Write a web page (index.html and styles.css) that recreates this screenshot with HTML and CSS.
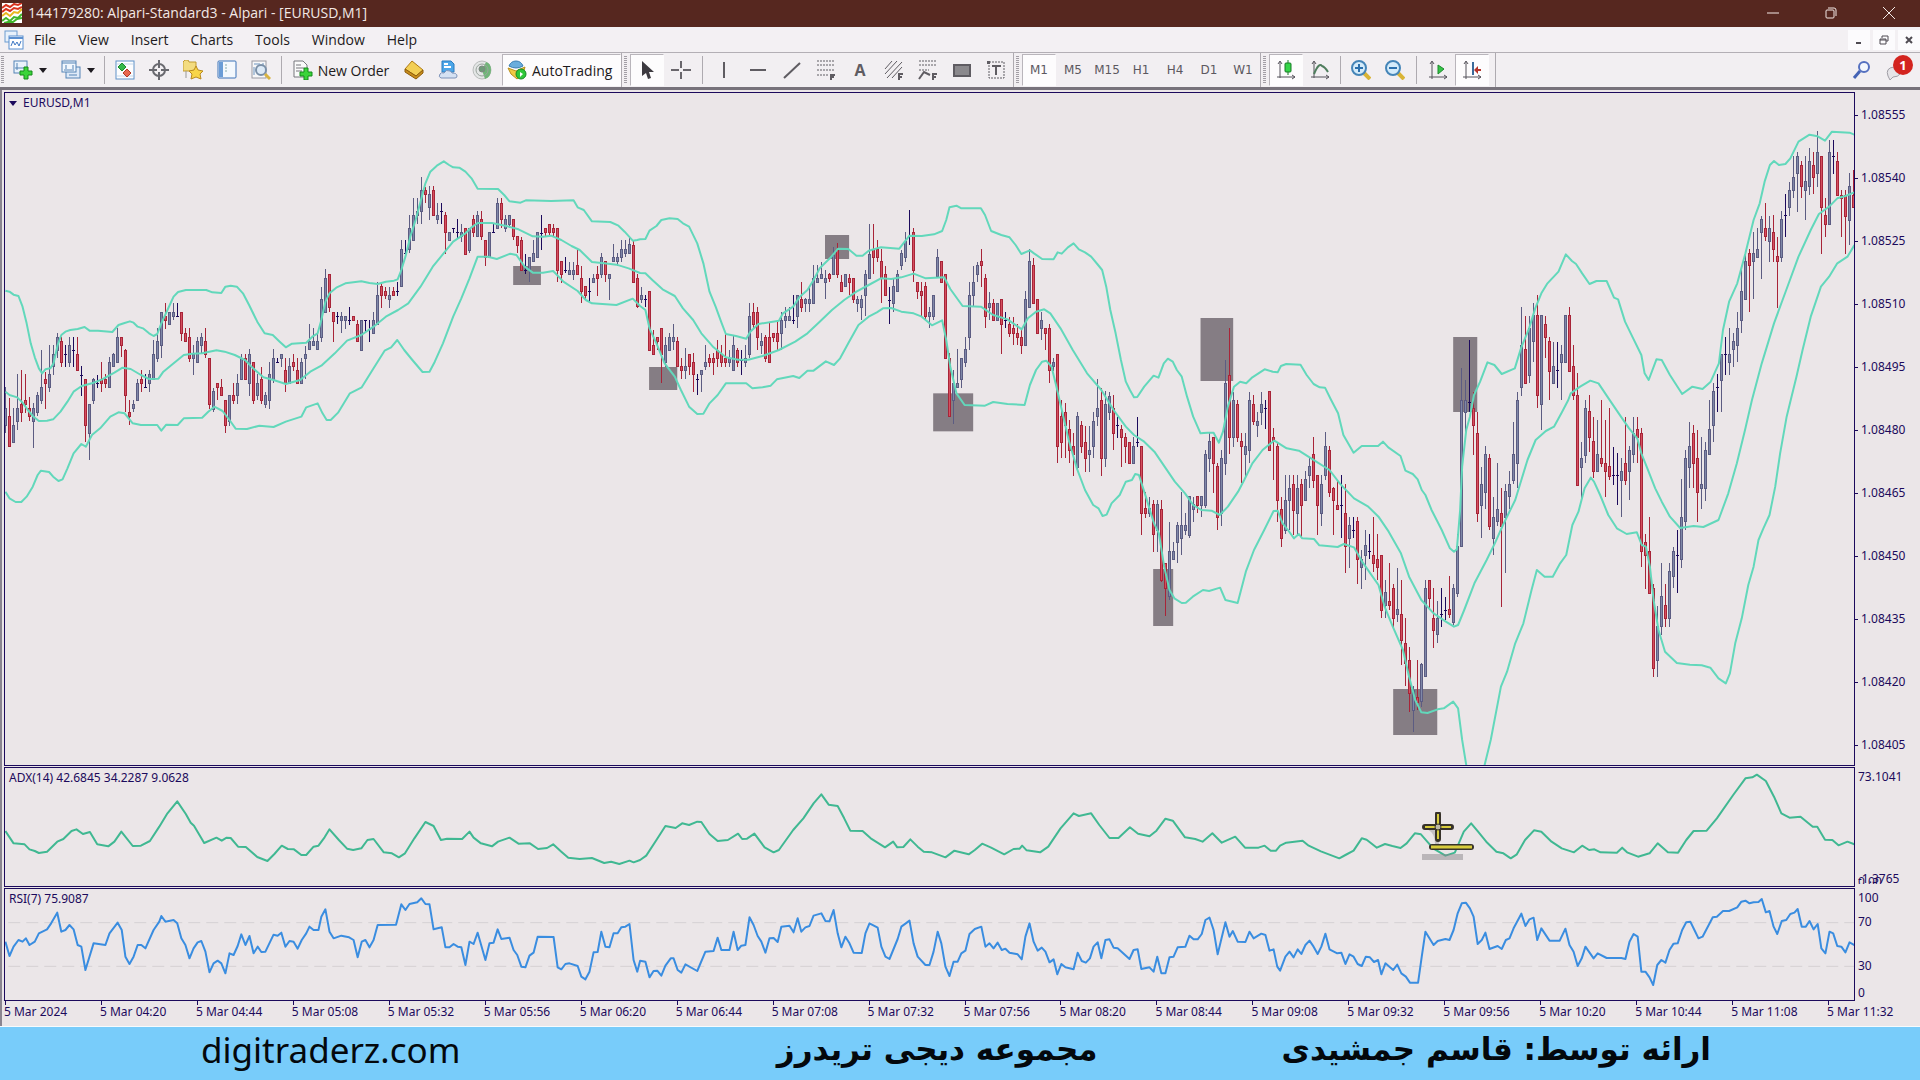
FILE: index.html
```
<!DOCTYPE html>
<html lang="en">
<head>
    <meta charset="UTF-8">
    <meta name="viewport" content="width=device-width, initial-scale=1.0">
    <title>144179280: Alpari-Standard3 - Alpari - [EURUSD,M1]</title>
    <link rel="stylesheet" href="styles.css">
</head>
<body>
    <header class="titlebar">
        <svg class="app-icon" viewBox="0 0 20 20"><rect width="20" height="20" fill="#fff"/><path d="M0 5l4-3 4 2 4-3 4 1 4-2M0 9l4-3 4 2 4-3 4 1 4-2" fill="none" stroke="#d8321e" stroke-width="2"/><path d="M0 13l4-3 4 3 4-4 4 1 4-4" fill="none" stroke="#e8b820" stroke-width="2"/><path d="M0 18l4-3 4 3 4-4 4 1 4-4M2 20l4-1 5 0 4-3 5-1" fill="none" stroke="#3fb52a" stroke-width="2"/></svg>
        <h1>144179280: Alpari-Standard3 - Alpari - [EURUSD,M1]</h1>
        <div class="win-buttons">
            <button aria-label="Minimize"><svg viewBox="0 0 14 14"><path d="M1 7h12"/></svg></button>
            <button aria-label="Restore"><svg viewBox="0 0 14 14"><rect x="2" y="4" width="8" height="8" rx="1"/><path d="M4 2h6q2 0 2 2v6"/></svg></button>
            <button aria-label="Close"><svg viewBox="0 0 14 14"><path d="M1 1l12 12M13 1L1 13"/></svg></button>
        </div>
    </header>

    <nav class="menubar">
        <svg class="doc-icon" viewBox="0 0 20 20"><rect x="1" y="1" width="12" height="11" fill="#e8f1fb" stroke="#6d9bd0"/><rect x="5" y="6" width="14" height="13" fill="#fff" stroke="#5b8fd0"/><path d="M5 8h14" stroke="#5b8fd0" stroke-width="2"/><path d="M7 16l2-5 2 4 2-3 2 4 2-5" fill="none" stroke="#3f78c4"/></svg>
        <button>File</button>
        <button>View</button>
        <button>Insert</button>
        <button>Charts</button>
        <button>Tools</button>
        <button>Window</button>
        <button>Help</button>
        <div class="mdi-buttons">
            <button aria-label="Minimize chart"><svg viewBox="0 0 10 10"><path d="M2 8h5" stroke-width="2"/></svg></button>
            <button aria-label="Restore chart"><svg viewBox="0 0 10 10"><path d="M3 3V1h6v5H7M1 4h6v5H1zM1 5h6"/></svg></button>
            <button aria-label="Close chart"><svg viewBox="0 0 10 10"><path d="M2 2l6 6M8 2L2 8" stroke-width="2"/></svg></button>
        </div>
    </nav>

    <div class="toolbar">
        <span class="grip"></span>
        <button class="split" aria-label="New chart"><svg viewBox="0 0 20 20"><rect x="1" y="1" width="13" height="12" fill="#eaf2fb" stroke="#5583b5"/><path d="M4 3v7M2 8h10" stroke="#5583b5"/><path d="M11 7h4v4h4v4h-4v4h-4v-4H7v-4h4z" fill="#3bd43a" stroke="#158a1b"/></svg><i class="arrow"></i></button>
        <button class="split" aria-label="Profiles"><svg viewBox="0 0 20 20"><rect x="5" y="7" width="14" height="11" fill="#dfeaf8" stroke="#5583b5"/><rect x="1" y="1" width="14" height="11" fill="#f2f7fd" stroke="#5583b5"/><path d="M1 3h14M3 10h10M8 15h8M5 5v4M12 5v4" stroke="#5583b5"/></svg><i class="arrow"></i></button>
        <span class="sep"></span>
        <button class="tool" aria-label="Market Watch"><svg viewBox="0 0 20 20"><rect x="1" y="1" width="18" height="18" fill="#fdfdfe" stroke="#5f92c8"/><path d="M2 4h16M2 16h16" stroke="#c5d8ec"/><path d="M7 3l4 4-4 4-4-4z" fill="#35b84a" stroke="#1d8a2c"/><path d="M12 9l4 4-4 4-4-4z" fill="#e8694f" stroke="#b33a26"/></svg></button>
        <button class="tool" aria-label="Data Window"><svg viewBox="0 0 20 20"><circle cx="10" cy="10" r="6" fill="none" stroke="#69696f" stroke-width="2"/><path d="M10 0v8M10 12v8M0 10h8M12 10h8" stroke="#69696f" stroke-width="2"/></svg></button>
        <button class="tool" aria-label="Navigator"><svg viewBox="0 0 20 20"><path d="M0 2l2-2h3l1 2h7v9H0z" fill="#f3dc80" stroke="#c09a30"/><path d="M3 11v7" stroke="#999"/><path d="M13 6l2 4 5 1-3 3 1 5-5-2-5 2 1-5-3-3 5-1z" fill="#f8d548" stroke="#b98a20"/></svg></button>
        <button class="tool" aria-label="Terminal"><svg viewBox="0 0 20 20"><rect x="1" y="1" width="18" height="17" rx="1" fill="#f4f8fd" stroke="#3c73b8"/><path d="M2 2h4v15H2z" fill="#6b9cd6"/><path d="M8 5h2M8 8h2M8 11h2" stroke="#8aa"/></svg></button>
        <button class="tool" aria-label="Strategy Tester"><svg viewBox="0 0 20 20"><rect x="1" y="1" width="14" height="17" fill="#f7f7f9" stroke="#9a9aa2"/><path d="M3 4h6M3 7v8M12 3v4" stroke="#6d94bf"/><circle cx="10" cy="10" r="5" fill="#d6e6f6" fill-opacity=".8" stroke="#7b90a8" stroke-width="2"/><path d="M14 14l5 5" stroke="#d8b341" stroke-width="3"/></svg></button>
        <span class="sep"></span>
        <button class="labelled order"><svg viewBox="0 0 20 20"><path d="M1 1h9l4 4v12H1z" fill="#fafafa" stroke="#77777d"/><path d="M3 5h5M3 8h8M3 11h6" stroke="#77777d"/><path d="M11 8h4v4h4v4h-4v4h-4v-4H7v-4h4z" fill="#3bd43a" stroke="#158a1b"/></svg>New Order</button>
        <button class="tool" aria-label="MetaEditor"><svg viewBox="0 0 20 20"><path d="M8 1l11 9-7 6L1 9z" fill="#f3cf55" stroke="#b07a14"/><path d="M1 9l11 7 7-6v3l-7 6L1 12z" fill="#c98d1c" stroke="#8d5c0c"/></svg></button>
        <button class="tool" aria-label="Cloud"><svg viewBox="0 0 20 20"><path d="M4 1h9l3 3v8H4z" fill="#4da6e8" stroke="#2a7cc0"/><path d="M6 4h4M6 7h7" stroke="#fff" stroke-width="2"/><path d="M3 18q-3-1-1-4 1-2 4-1 2-4 6-2 2 1 2 2 5 0 5 3 0 2-2 2z" fill="#d5e1f3" stroke="#7d92b8"/></svg></button>
        <button class="tool" aria-label="Signals"><svg viewBox="0 0 20 20"><circle cx="10" cy="10" r="9" fill="#e4e6e6" stroke="#b9bcbb"/><path d="M10 10l3 9q6-2 6-9t-5-8z" fill="#70b578"/><circle cx="10" cy="10" r="6" fill="none" stroke="#9aa39d"/><circle cx="10" cy="9" r="3" fill="#6f9a79" stroke="#7d8880"/></svg></button>
        <button class="labelled auto pressed"><svg viewBox="0 0 20 20"><path d="M2 6q2-5 7-5t7 5q-7 4-14 0z" fill="#6aaddc" stroke="#3a7fb3"/><path d="M1 8l8 3 9-4-2 7-6 5-6-5z" fill="#f0c945" stroke="#b88f1e"/><circle cx="14" cy="14" r="5" fill="#2fc83a" stroke="#168a22"/><path d="M13 12v5l3-3z" fill="#fff"/></svg>AutoTrading</button>
        <span class="edge"></span>

        <button class="tool pressed" aria-label="Cursor"><svg viewBox="0 0 20 20"><path d="M5 1v15l4-3 2 6 3-1-2-6h5z" fill="#3d3a40"/></svg></button>
        <button class="tool" aria-label="Crosshair"><svg viewBox="0 0 20 20"><path d="M10 1v7M10 12v7M0 10h8M12 10h8" stroke="#69666c" stroke-width="2"/></svg></button>
        <span class="sep wide"></span>
        <button class="tool" aria-label="Vertical line"><svg viewBox="0 0 20 20"><path d="M10 2v16" stroke="#5f5c62" stroke-width="2"/></svg></button>
        <button class="tool" aria-label="Horizontal line"><svg viewBox="0 0 20 20"><path d="M2 10h16" stroke="#5f5c62" stroke-width="2"/></svg></button>
        <button class="tool" aria-label="Trendline"><svg viewBox="0 0 20 20"><path d="M2 18L18 3" stroke="#5f5c62" stroke-width="2"/></svg></button>
        <button class="tool" aria-label="Fibonacci retracement"><svg viewBox="0 0 20 20"><path d="M1 1h17M1 5h17M1 10h17M1 15h11" stroke="#5f5c62" stroke-dasharray="2 1"/><path d="M15 20v-5h4M15 17h3" fill="none" stroke="#5f5c62" stroke-width="2"/></svg></button>
        <button class="tool letter">A</button>
        <button class="tool" aria-label="Equidistant channel"><svg viewBox="0 0 20 20"><path d="M1 9L8 1M1 14L13 1M3 18L18 2M8 18L18 7" stroke="#5f5c62"/><path d="M15 20v-6h4M15 17h3" fill="none" stroke="#5f5c62" stroke-width="2"/></svg></button>
        <button class="tool" aria-label="Fibonacci fan"><svg viewBox="0 0 20 20"><path d="M1 1h18M1 5h18M1 10h10" stroke="#5f5c62" stroke-dasharray="2 1"/><path d="M1 19l5-7 6 3M15 20v-6h4M15 17h3" fill="none" stroke="#5f5c62" stroke-width="2"/></svg></button>
        <button class="tool" aria-label="Rectangle"><svg viewBox="0 0 20 20"><rect x="2" y="5" width="16" height="11" fill="#8b898d" stroke="#5f5c62" stroke-width="2"/></svg></button>
        <button class="tool" aria-label="Text label"><svg viewBox="0 0 20 20"><rect x="3" y="2" width="15" height="16" fill="none" stroke="#5f5c62" stroke-dasharray="2 1"/><path d="M1 1h3v3H1z" fill="#5f5c62"/><path d="M6 6h9M10 6v9" stroke="#5f5c62" stroke-width="2"/></svg></button>
        <span class="edge"></span>

        <button class="tool period pressed">M1</button>
        <button class="tool period">M5</button>
        <button class="tool period">M15</button>
        <button class="tool period">H1</button>
        <button class="tool period">H4</button>
        <button class="tool period">D1</button>
        <button class="tool period">W1</button>
        <span class="edge"></span>

        <button class="tool pressed" aria-label="Candlesticks"><svg viewBox="0 0 20 20"><path d="M4 2v16M1 17h18M2 4l2-3 2 3M16 15l3 2-3 2" fill="none" stroke="#55525a"/><path d="M12 0v15" stroke="#177a25"/><rect x="9" y="3" width="6" height="9" rx="1" fill="#35d548" stroke="#177a25"/></svg></button>
        <button class="tool" aria-label="Line chart"><svg viewBox="0 0 20 20"><path d="M4 2v16M1 17h18M2 4l2-3 2 3M16 15l3 2-3 2" fill="none" stroke="#55525a"/><path d="M4 14q5-12 8-8 3 1 6 6" fill="none" stroke="#4f7d5d" stroke-width="2"/></svg></button>
        <span class="sep"></span>
        <button class="tool" aria-label="Zoom in"><svg viewBox="0 0 20 20"><path d="M13 13l6 6" stroke="#d9b436" stroke-width="4"/><circle cx="8" cy="8" r="7" fill="#d4ebfa" stroke="#4585b8" stroke-width="2"/><path d="M4 8h8M8 4v8" stroke="#2b70ad" stroke-width="2"/></svg></button>
        <button class="tool" aria-label="Zoom out"><svg viewBox="0 0 20 20"><path d="M13 13l6 6" stroke="#d9b436" stroke-width="4"/><circle cx="8" cy="8" r="7" fill="#d4ebfa" stroke="#4585b8" stroke-width="2"/><path d="M4 8h8" stroke="#2b70ad" stroke-width="2"/></svg></button>
        <span class="sep wide"></span>
        <button class="tool" aria-label="Auto scroll"><svg viewBox="0 0 20 20"><path d="M4 2v17M1 17h18M2 4l2-3 2 3M16 15l3 2-3 2" fill="none" stroke="#55525a"/><path d="M10 5v9l6-5z" fill="#35c548" stroke="#1d8a2c"/></svg></button>
        <button class="tool pressed" aria-label="Chart shift"><svg viewBox="0 0 20 20"><path d="M4 2v17M1 17h18M2 4l2-3 2 3M16 15l3 2-3 2" fill="none" stroke="#55525a"/><path d="M11 2v13" stroke="#3a6a9a" stroke-width="2"/><path d="M12 10l4-4v3h3v2h-3v3z" fill="#b5342b"/></svg></button>
        <span class="edge last"></span>

        <div class="toolbar-right">
            <button class="tool" aria-label="Search"><svg viewBox="0 0 20 20"><path d="M8 11l-6 7" stroke="#4563b5" stroke-width="3"/><circle cx="12" cy="7" r="5" fill="#f4f7fd" stroke="#5570c0" stroke-width="2"/></svg></button>
            <button class="tool notify" aria-label="Notifications"><svg viewBox="0 0 20 20"><path d="M2 16q-3-8 6-9 8 1 6 7-2 3-7 3l-3 3z" fill="#e6e4e8" stroke="#a09ea6"/></svg><span class="badge">1</span></button>
        </div>
    </div>

    <main class="terminal">
        <section class="pane price">
            <div class="plot">
                <h2 class="caption"><i class="arrow"></i>EURUSD,M1</h2>
                <svg id="priceChart" viewBox="12 -81 4530 2016" preserveAspectRatio="none"></svg>
            </div>
            <ul class="scale">
                <li>1.08555</li>
                <li>1.08540</li>
                <li>1.08525</li>
                <li>1.08510</li>
                <li>1.08495</li>
                <li>1.08480</li>
                <li>1.08465</li>
                <li>1.08450</li>
                <li>1.08435</li>
                <li>1.08420</li>
                <li>1.08405</li>
            </ul>
        </section>
        <section class="pane adx">
            <div class="plot">
                <h2 class="caption">ADX(14) 42.6845 34.2287 9.0628</h2>
                <svg id="adxChart" viewBox="12 24 4530 354" preserveAspectRatio="none"></svg>
                <svg class="pointer" viewBox="0 0 56 56"><path d="M3 42h41v6H3z" fill="#8a858a" fill-opacity=".5"/><path d="M10 16q8 4 8 16" fill="none" stroke="#8a858a" stroke-opacity=".4" stroke-width="4"/><path d="M19 2v25M6 15h26" stroke="#37322a" stroke-width="6" stroke-linecap="round"/><path d="M19 2v25M6 15h26" stroke="#d8cc3c" stroke-width="2"/><circle cx="19" cy="15" r="3" fill="#bdb8a4" stroke="#37322a"/><path d="M13 35h39" stroke="#37322a" stroke-width="6" stroke-linecap="round"/><path d="M12 35h41" stroke="#d8cc3c" stroke-width="3"/></svg>
            </div>
            <ul class="scale">
                <li>73.1041</li>
                <li class="low">-1.3765<span class="zero">0.00</span></li>
            </ul>
        </section>
        <section class="pane rsi">
            <div class="plot">
                <h2 class="caption">RSI(7) 75.9087</h2>
                <svg id="rsiChart" viewBox="12 387 4530 333" preserveAspectRatio="none">
                    <path class="level" d="M20 488H4542M20 619H4542"/>
                </svg>
            </div>
            <ul class="scale">
                <li>100</li>
                <li>70</li>
                <li>30</li>
                <li>0</li>
            </ul>
        </section>
        <ol class="times">
            <li>5 Mar 2024</li>
            <li>5 Mar 04:20</li>
            <li>5 Mar 04:44</li>
            <li>5 Mar 05:08</li>
            <li>5 Mar 05:32</li>
            <li>5 Mar 05:56</li>
            <li>5 Mar 06:20</li>
            <li>5 Mar 06:44</li>
            <li>5 Mar 07:08</li>
            <li>5 Mar 07:32</li>
            <li>5 Mar 07:56</li>
            <li>5 Mar 08:20</li>
            <li>5 Mar 08:44</li>
            <li>5 Mar 09:08</li>
            <li>5 Mar 09:32</li>
            <li>5 Mar 09:56</li>
            <li>5 Mar 10:20</li>
            <li>5 Mar 10:44</li>
            <li>5 Mar 11:08</li>
            <li>5 Mar 11:32</li>
        </ol>
    </main>

    <footer class="banner">
        <span class="site">digitraderz.com</span>
        <span lang="fa" dir="rtl">مجموعه دیجی تریدرز</span>
        <span lang="fa" dir="rtl">ارائه توسط: قاسم جمشیدی</span>
    </footer>
    <script src="script.js"></script>
</body>
</html>
```
FILE: styles.css
```
* {
    box-sizing: border-box;
}
body {
    margin: 0;
    height: 100vh;
    display: flex;
    flex-direction: column;
    overflow: hidden;
    background: #ebe6e8;
    color: #1d1a20;
    font-family: "Open Sans", "Noto Sans", sans-serif;
    font-size: 14px;
}
button {
    display: flex;
    align-items: center;
    justify-content: center;
    padding: 0;
    border: none;
    background: none;
    color: inherit;
    font: inherit;
}
ul, ol {
    margin: 0;
    padding: 0;
    list-style: none;
}
svg {
    display: block;
}

/* Title bar */
.titlebar {
    flex: none;
    display: flex;
    align-items: center;
    height: 27px;
    padding: 0 2px 2px;
    background: #56271f;
    color: #f3e9e6;
}
.app-icon {
    width: 20px;
    height: 20px;
}
.titlebar h1 {
    margin: 0 auto 0 6px;
    font-size: 14px;
    font-weight: 400;
    line-height: 24px;
}
.win-buttons {
    display: flex;
}
.win-buttons button {
    width: 58px;
    height: 24px;
}
.win-buttons svg {
    width: 14px;
    height: 14px;
    fill: none;
    stroke: #f3e9e6;
}

/* Menu */
.menubar {
    flex: none;
    display: flex;
    align-items: center;
    height: 26px;
    padding-left: 4px;
    background: #f3f0f3;
    border-bottom: 1px solid #b3afb5;
}
.doc-icon {
    width: 20px;
    height: 20px;
    margin-right: -1px;
}
.menubar > button {
    height: 25px;
    padding: 0 11px;
}
.mdi-buttons {
    display: flex;
    gap: 3px;
    margin-left: auto;
}
.mdi-buttons button {
    width: 22px;
    height: 20px;
    background: #fcfbfd;
}
.mdi-buttons svg {
    width: 10px;
    height: 10px;
    fill: none;
    stroke: #4f4b52;
}

/* Toolbar */
.toolbar {
    flex: none;
    display: flex;
    align-items: center;
    height: 37px;
    background: #f2eff2;
    border-bottom: 3px solid #77727b;
}
.toolbar svg {
    flex: none;
    width: 20px;
    height: 20px;
}
.grip {
    width: 3px;
    height: 28px;
    margin: 0 1px;
    background: repeating-linear-gradient(#a29ea5 0 1px, #f2eff2 1px 2px);
}
.tool {
    flex: none;
    width: 34px;
    height: 32px;
}
.split {
    flex: none;
    width: 48px;
    height: 32px;
    justify-content: flex-start;
    gap: 6px;
    padding-left: 8px;
}
.arrow {
    border: 4px solid transparent;
    border-top: 5px solid #1d1a20;
    border-bottom: none;
}
.sep {
    width: 1px;
    height: 28px;
    margin: 0 3px;
    background: #aeaab0;
}
.sep.wide {
    margin: 0 4px;
}
.labelled {
    flex: none;
    height: 32px;
    gap: 5px;
    white-space: nowrap;
}
.order {
    width: 112px;
}
.auto {
    width: 119px;
    margin-left: 3px;
    justify-content: flex-start;
    padding-left: 4px;
}
.pressed {
    background: #fdfcfd;
    border: 1px solid #b9b5bb;
    border-right-color: #fdfcfd;
    border-bottom-color: #fdfcfd;
}
.edge {
    width: 9px;
    height: 34px;
    border-left: 1px solid #aeaab0;
    background: repeating-linear-gradient(#a29ea5 0 1px, #f2eff2 1px 2px) 2px 3px / 3px 28px no-repeat;
}
.edge.last {
    margin-left: 6px;
    background: none;
}
.letter {
    color: #5f5c62;
    font-size: 16px;
    font-weight: 700;
}
.period {
    color: #5c585f;
    font-family: "DejaVu Sans", sans-serif;
    font-size: 12px;
}
.toolbar-right {
    display: flex;
    margin-left: auto;
    padding-right: 7px;
}
.notify {
    position: relative;
}
.badge {
    position: absolute;
    top: 1px;
    right: 0;
    width: 20px;
    height: 20px;
    border-radius: 50%;
    background: #d3241f;
    color: #fff;
    font-size: 13px;
    font-weight: 700;
    line-height: 20px;
}

/* Chart window */
.terminal {
    flex: 1;
    min-height: 0;
    display: flex;
    flex-direction: column;
    gap: 1px;
    padding: 2px 0 0 2px;
    border-left: 2px solid #8a8590;
    color: #1c0a5c;
    font-family: "Noto Sans", sans-serif;
    font-size: 12px;
    line-height: 16px;
}
.pane {
    display: flex;
    min-height: 0;
}
.price {
    flex: 674 1 0;
}
.adx {
    flex: 120 1 0;
}
.rsi {
    flex: 113 1 0;
}
.plot {
    position: relative;
    flex: 1;
    min-width: 0;
    border: 1px solid #1c0a5c;
}
.plot > svg {
    width: 100%;
    height: 100%;
}
.caption {
    position: absolute;
    top: 2px;
    left: 4px;
    display: flex;
    align-items: center;
    gap: 6px;
    margin: 0;
    font-size: 12px;
    font-weight: 400;
}
.caption .arrow {
    border-top-color: #1c0a5c;
}
.plot > .pointer {
    position: absolute;
    top: 37%;
    left: 76.5%;
    width: 56px;
    height: 56px;
}
.scale {
    flex: none;
    width: 65px;
    display: flex;
    flex-direction: column;
    justify-content: space-between;
}
.scale li {
    display: flex;
    align-items: center;
    gap: 3px;
}
.price .scale {
    padding: 15px 0 13px;
}
.price .scale li::before {
    content: "";
    width: 3px;
    height: 1px;
    background: #1c0a5c;
}
.adx .scale, .rsi .scale {
    padding-left: 3px;
}
.adx .scale, .rsi .scale {
    padding-top: 2px;
}
.low {
    position: relative;
}
.zero {
    position: absolute;
    top: 3px;
    left: 0;
    height: 10px;
    overflow: hidden;
}
.rsi .scale {
    display: grid;
    grid-template-rows: 24fr 44fr 27fr 16fr;
    align-items: start;
}
.times {
    flex: none;
    display: flex;
    height: 25px;
    margin: -1px 65px 0 0;
    white-space: nowrap;
}
.times li {
    flex: 96 1 0;
    min-width: 0;
    padding-top: 3px;
    background: linear-gradient(#1c0a5c, #1c0a5c) 1px 0 / 1px 4px no-repeat;
}
.times li:last-child {
    flex-grow: 28;
}

/* Chart drawing */
.band, .adx-line, .rsi-line {
    fill: none;
    stroke-width: 2px;
    stroke-linejoin: round;
}
.band {
    stroke: #62d8bb;
}
.adx-line {
    stroke: #40b892;
}
.rsi-line {
    stroke: #3a8de0;
}
.level {
    fill: none;
    stroke: #d5d1d3;
    stroke-dasharray: 12 6;
}
.band, .adx-line, .rsi-line, .level, .wick, .body {
    vector-effect: non-scaling-stroke;
}
.zone {
    fill: #857d84;
}
.wick, .body {
    shape-rendering: crispEdges;
    stroke-width: 1px;
}
.up {
    stroke: #5c5c82;
    fill: #7f88a8;
}
.down {
    stroke: #a82438;
    fill: #d4505f;
}
.doji {
    stroke: #1c0a5c;
    fill: none;
}

/* Bottom banner */
.banner {
    flex: none;
    display: flex;
    align-items: center;
    gap: 184px;
    height: 54px;
    padding: 0 209px 8px 201px;
    border-top: 1px solid #f7fbfd;
    background: #78ccfa;
    color: #04080c;
    font-family: "DejaVu Sans", sans-serif;
    font-size: 31px;
    font-weight: 700;
    line-height: 45px;
    white-space: nowrap;
}
.site {
    margin-right: auto;
    font-family: "Noto Sans", sans-serif;
    font-size: 35px;
    font-weight: 400;
}
```
FILE: script.js
```
const SVG_NS = 'http://www.w3.org/2000/svg';
const BAR_STEP = 9.8;
const BAR_START = 13.5;

// One entry per bar: direction (b up, r down, d doji), high, body top, body bottom, low
const bars = `
b800,865,915,940 r835,888,980,980 b865,915,968,968 b762,865,905,930 r750,852,877,905 r762,840,852,880 r830,865,888,903 b850,865,905,983
b815,825,877,888 b690,802,840,852 r755,778,790,867 b675,762,803,815 b675,703,740,765 b638,652,690,715 r650,663,727,740 d675,703,703,740
b650,677,727,740 d650,690,690,740 r650,703,752,752 d738,765,765,827 r778,778,917,967 b852,852,940,1020 b775,778,842,852 d765,790,790,803
r725,778,790,815 r762,778,790,803 b712,727,803,803 b700,703,740,740 b625,652,727,727 r650,652,677,710 r687,690,827,877 r840,877,890,915
b840,852,865,877 b778,790,840,840 r750,778,790,815 d762,803,803,803 b750,762,790,815 b660,703,778,778 b625,663,715,727 b575,577,677,715
r548,588,600,627 b575,577,614,614 b548,577,590,600 d548,588,588,590 r575,577,640,663 r625,640,663,663 r625,652,714,727 b675,703,715,765
b650,663,727,727 b640,652,677,700 r625,663,703,715 r714,715,852,867 b803,815,867,877 r790,790,803,840 r778,803,827,827 r840,840,917,940
b825,827,903,917 r790,827,840,852 b762,790,827,852 b703,715,778,778 r703,715,778,778 b688,703,790,827 r725,727,842,852 b762,790,827,840
r740,778,840,852 b815,827,852,865 b725,762,840,867 b687,715,778,790 d714,727,727,727 b703,703,715,740 r715,752,790,815 b715,740,790,790
r703,727,740,752 r715,752,790,790 b714,727,790,790 b677,703,715,778 b612,663,688,690 b625,663,677,677 b638,663,688,688 b500,538,652,665
b447,475,577,577 r463,463,563,575 r575,577,603,665 d575,590,590,612 b577,588,600,640 b588,588,600,627 d560,600,600,615 r588,588,600,603
r600,614,665,665 b600,600,690,690 d600,602,602,640 d600,627,627,665 b577,600,640,640 b487,527,614,614 r487,500,527,563 r500,513,525,538
b500,527,538,563 r500,513,525,527 d487,515,515,527 b360,387,500,500 d360,400,400,412 b285,325,387,400 b233,285,362,362 b235,273,287,312
b170,210,273,312 r200,210,223,250 b198,223,262,300 r198,210,287,287 b250,285,298,312 d248,273,273,312 r275,285,337,403 b337,337,362,362
d325,326,326,340 d297,337,337,355 b312,337,350,365 r325,325,403,403 b325,325,390,400 r285,298,337,350 b273,285,350,350 r273,298,350,360
r360,362,412,437 b337,337,412,412 d312,337,337,340 b233,250,325,325 r235,250,298,325 b285,298,325,337 b285,285,312,325 r297,298,350,360
r348,350,375,400 r350,362,450,452 d403,452,452,463 b412,412,452,487 b360,400,425,425 b337,337,412,412 d285,340,340,390 r323,325,337,350
r312,312,337,345 r312,325,337,350 r325,325,452,487 r425,425,463,490 d412,450,450,460 b425,450,463,463 b425,450,463,480 r390,437,463,463
r437,475,513,550 r500,500,527,540 d475,514,514,545 b463,475,487,487 r437,463,475,527 b400,412,463,475 r425,425,463,487 b463,463,475,540
b372,412,425,425 b400,412,425,437 b360,387,412,425 b360,387,400,412 b350,372,400,400 r362,375,487,490 r463,475,560,563
b500,527,538,550 d525,538,538,560 r513,513,690,690 r630,675,703,703 r650,652,664,690 r625,625,703,790 b650,676,727,740 b640,652,690,690
b612,652,663,690 r650,663,740,740 r715,740,752,778 b685,740,752,778 r703,703,740,765 r700,727,763,815 d762,778,778,825 b750,752,764,815
b675,727,740,750 r703,714,727,740 r700,714,727,765 r660,690,715,740 r675,703,727,740 r640,714,727,740 b690,714,727,740 b645,676,752,752
r685,690,727,740 d690,720,720,765 b675,714,727,740 b550,588,703,715 r550,576,614,625 r560,576,652,690 b640,664,676,703 r645,652,715,727
r610,652,727,727 r640,640,652,665 r600,640,664,690 b575,600,640,690 b560,588,600,625 b560,588,600,600 d525,600,600,612 b525,525,590,625
r487,538,563,575 b535,538,550,575 b500,538,550,575 b435,475,550,550 b435,475,487,490 b425,462,475,475 b450,475,487,538 r460,462,475,487
b380,405,463,463 r370,390,463,475 r465,487,515,515 b462,462,500,500 r462,475,487,525 r475,475,538,550 b527,538,550,575 b525,538,563,600
b450,463,527,588 b312,403,475,475 r312,387,413,463 r360,387,413,425 r387,425,475,550 r437,463,527,527 d500,540,540,612 b475,500,550,575
b450,463,515,515 b390,400,437,450 b337,363,413,425 d270,350,350,375 r325,337,452,487 r487,487,515,538 r487,515,527,590 r487,500,590,600
b562,576,590,625 b525,527,590,600 b387,412,470,470 r422,425,487,487 r462,463,716,716 r700,716,889,889 b750,790,840,912 b687,790,803,803
b714,716,778,803 b650,688,727,740 b487,527,652,690 b437,487,527,560 b425,437,463,487 r387,425,437,500 r463,475,590,625 b515,550,563,600
r538,550,600,600 b550,550,600,600 r538,538,612,703 d577,600,600,625 r590,612,640,650 r590,625,640,675 r612,640,652,675 r625,652,676,703
b513,538,676,676 b387,425,563,563 r413,437,550,550 r538,538,640,640 b575,600,625,660 r625,625,640,690 r612,625,752,790 b715,727,740,752
r703,703,980,1030 r840,890,967,1015 r850,877,917,1015 r900,928,990,1030 r940,980,1003,1067 b877,890,1042,1050 r903,917,980,1000 r917,967,1015,1055
b917,990,1003,1055 b877,903,980,1015 b778,865,890,917 r803,840,1015,1067 b812,852,1015,1040 b815,828,877,900 r825,865,940,990 d890,917,917,955
r915,928,952,1040 r940,952,980,1030 r965,967,1030,1030 b950,980,1030,1030 d890,967,967,980 r980,980,1180,1245 r1115,1165,1180,1195 b1130,1165,1180,1190
r1140,1152,1243,1295 b1140,1152,1230,1295 r1140,1167,1380,1385 r1330,1330,1405,1487 b1205,1293,1430,1440 b1267,1293,1318,1320 b1205,1216,1267,1330 b1115,1216,1255,1305
b1180,1216,1230,1245 b1127,1130,1245,1255 b1130,1152,1167,1205 r1128,1130,1155,1180 b1127,1130,1155,1192 b990,1003,1155,1165 b935,965,1015,1055 r950,952,1030,1118
r1030,1040,1192,1230 b990,1015,1180,1218 b720,790,1030,1065 r625,765,952,1003 b815,840,952,980 r840,852,952,965 r940,965,980,1090 b940,980,1003,1067
b815,840,990,1030 r825,852,905,915 b877,903,917,952 b815,852,877,915 d840,865,865,928 r812,815,990,990 r925,952,965,1080 r965,980,1142,1205
r1130,1167,1255,1280 b1065,1142,1230,1243 b1065,1105,1142,1230 r1065,1092,1170,1245 b1065,1105,1180,1245 r1077,1092,1155,1255 b1052,1077,1142,1142 b1015,1040,1067,1105
r952,1003,1080,1105 r1065,1065,1155,1245 b1065,1092,1180,1218 b937,980,1067,1080 r977,990,1118,1130 r1102,1105,1142,1245 r1080,1155,1167,1170 d1065,1155,1155,1255
r1092,1180,1280,1360 b1192,1216,1255,1343 d1190,1230,1230,1255 r1192,1205,1318,1393 b1290,1318,1343,1407 b1230,1277,1307,1380 d1243,1293,1293,1318 r1192,1305,1330,1355
r1243,1318,1343,1380 r1305,1305,1470,1495 b1380,1418,1457,1495 r1330,1443,1457,1470 r1393,1405,1495,1525 b1343,1468,1482,1507 r1380,1482,1560,1635 r1495,1570,1630,1697
r1580,1620,1720,1775 b1697,1710,1770,1835 r1620,1733,1747,1770 b1630,1633,1745,1760 b1380,1405,1670,1670 r1380,1380,1435,1465 r1405,1495,1530,1583 b1443,1495,1543,1570
d1403,1483,1483,1520 d1430,1470,1470,1500 r1368,1468,1482,1495 b1393,1405,1507,1515 b1243,1280,1420,1430 b745,840,1280,1280 b780,840,877,960 d660,848,848,875
r815,865,917,1005 r875,940,1180,1205 b1040,1092,1155,1255 b977,1003,1118,1167 r1003,1015,1218,1230 b1130,1192,1255,1305 b1030,1167,1205,1218 r1105,1180,1218,1460
b1092,1115,1192,1358 b1052,1092,1130,1167 b905,1003,1080,1092 b815,840,1030,1105 b560,675,803,827 r587,688,790,790 b587,625,765,790 b550,587,665,725
r525,587,827,865 b587,587,853,930 r587,613,653,715 r650,665,753,840 b665,740,790,790 d665,752,752,803 b675,703,727,840 b587,587,727,727
r560,587,753,753 r675,740,827,840 r760,825,1095,1095 b965,1015,1043,1140 b840,865,1005,1030 r825,875,953,995 r890,965,1055,1075 b900,1003,1055,1055
r840,1015,1030,1040 r900,1030,1055,1130 r865,1040,1068,1080 d980,1067,1067,1095 d1000,1067,1067,1155 b1015,1053,1080,1190 r890,1030,1080,1095 b978,990,1055,1140
b890,940,1003,1030 r890,928,953,1030 r925,940,1295,1340 r1243,1267,1305,1407 r1192,1293,1420,1420 r1393,1405,1645,1670 b1457,1520,1620,1670 b1330,1430,1520,1545
r1393,1455,1495,1520 b1330,1355,1495,1520 b1280,1293,1368,1405 d1230,1307,1307,1420 b1077,1192,1318,1343 b990,1015,1205,1230 b905,978,1042,1105 r915,940,1030,1105
r930,1015,1118,1205 b952,1092,1105,1167 b965,990,1105,1142 b840,928,1003,1003 b790,815,917,965 d763,803,803,877 b703,703,780,877 d650,703,703,765
b625,703,727,765 b640,665,688,740 b577,625,675,727 b450,513,600,640 b400,425,538,538 r388,400,437,575 b337,400,425,538 b325,388,413,413
b288,298,337,477 r250,325,350,363 b288,325,363,425 r285,337,388,425 r350,410,425,563 b273,298,413,425 d222,286,286,350 b185,210,262,288
b108,172,212,235 b97,108,160,275 r123,137,200,235 b108,185,212,300 b85,123,200,225 r97,135,172,222 b33,97,160,200 r108,110,262,403
r235,286,313,350 b60,97,313,313 d60,110,110,162 r97,123,225,225 r210,225,235,350 r210,225,288,403 b160,200,300,375 r150,225,262,262
`;

// Marked areas: x, y, width, height
const zones = [
    [1257, 438, 68, 57],
    [1590, 741, 69, 69],
    [2021, 345, 59, 72],
    [2286, 820, 98, 114],
    [2941, 594, 80, 189],
    [2825, 1347, 49, 171],
    [3560, 651, 59, 225],
    [3413, 1707, 108, 138]
];

// Every line is a list of stretches: [x origin, y origin, points]
const upperBand = [
    [0, 0, '13,512 23,515 33,524 45,528 55,560 65,610 75,670 85,712 95,745 103,760 111,748 123,745 131,730 141,675 150,645 160,635 172,630 190,627 207,621 219,632 240,632 275,636 290,615 305,609 318,604 327,608 337,620 350,625 365,640 376,648 385,642 395,610 410,570 425,530 436,516 455,510 505,510 520,517 542,519 552,500 565,497 580,500 595,520 610,555 630,605 648,640 668,645 685,665 700,682 715,671 750,668 765,650 778,640 787,600 797,545 807,520 825,502 846,490 885,484 905,489 925,492 945,485 965,482 974,478 983,450 993,410 1005,350 1018,300 1030,245 1042,190 1054,155 1070,137 1087,124 1100,135 1110,142 1125,143 1140,155 1155,175 1170,206 1220,207 1235,225 1248,244 1275,248 1288,241 1350,243 1405,241 1415,262 1430,270 1450,304 1495,306 1515,317 1530,335 1550,362 1561,360'],
    [1568, 0, '0,358 13,357 23,332 40,318 52,300 72,295 92,297 105,310 120,320 140,370 155,430 170,515 185,560 200,610 210,642 235,648 260,656 270,635 290,612 340,602 350,580 375,560 390,532 410,510 425,480 440,445 465,415 485,386 510,387 530,407 545,407 560,392 590,382 635,386 645,370 660,347 690,348 720,343 740,333 750,300 758,262 775,257 787,265 835,265 845,285 860,333 885,345 905,352 920,375 934,402 955,391 965,400 985,417 1013,418 1023,397 1033,401 1048,382 1062,370 1075,388 1090,397 1105,410 1120,432 1132,450 1142,500 1152,570 1165,640 1178,720 1190,785 1200,810 1210,832 1218,831 1235,800 1258,767 1270,773 1283,730 1293,716 1305,725 1315,750 1327,770 1340,830 1355,890 1373,940 1390,938 1405,938 1418,968 1428,935 1440,860 1455,800 1470,785 1485,790 1500,772 1530,748 1550,755 1562,757'],
    [3136, -90, '2,828 15,822 50,824 65,855 82,882 97,892 110,893 125,930 142,970 155,1035 180,1088 200,1068 240,1068 252,1055 265,1072 295,1098 307,1142 325,1152 337,1168 347,1200'],
    [2352, 840, '1140,285 1155,330 1180,390 1200,445 1210,455 1217,448 1225,330 1230,200 1240,90'],
    [3136, -90, '465,980 475,915 490,875 508,817 525,825 543,852 575,835 590,775 610,715 625,655 640,610 655,580 682,545 700,493 715,513 725,522 740,550 758,582 775,573 800,573 818,623 828,628 845,695 865,745 885,795 893,850 903,870 922,808 935,810 955,855 985,912 1010,890 1035,897 1055,875 1075,820 1085,720 1100,635 1120,580 1140,490 1160,390 1175,340 1187,275 1200,225 1210,213 1222,225 1238,222 1250,205 1270,155 1297,134 1317,139 1335,152 1352,125 1395,128 1407,134']
];
const middleBand = [
    [0, 0, '13,815 23,825 42,832 55,848 68,870 80,888 95,903 115,902 130,898 148,875 165,845 180,815 200,798 225,790 250,778 280,758 300,743 320,747 345,765 365,777 388,776 400,755 420,735 450,705 470,701 495,700 530,691 550,695 575,705 600,720 620,745 645,772 670,780 700,792 735,780 760,755 787,737 820,700 850,662 885,645 915,620 945,590 975,570 1000,550 1030,500 1060,440 1090,395 1110,365 1140,340 1155,322 1170,309 1205,309 1240,318 1270,328 1305,349 1330,350 1350,347 1375,360 1400,378 1420,390 1450,426 1480,430 1510,434 1540,445 1568,459'],
    [1568, 0, '13,460 30,480 55,508 85,528 105,565 130,600 150,640 180,682 210,712 240,719 265,719 300,708 340,690 380,665 410,640 440,605 470,570 500,540 530,515 560,495 590,475 615,477 640,472 670,461 700,475 745,472 760,507 790,558 835,560 865,585 900,598 935,628 950,595 970,575 990,568 1005,580 1030,625 1060,690 1095,760 1130,810 1160,870 1190,920 1210,945 1235,965 1260,995 1285,1040 1310,1085 1335,1120 1355,1155 1375,1170 1400,1172 1420,1185 1440,1160 1465,1115 1480,1080 1500,1030 1525,990 1550,965'],
    [2352, 840, '770,122 800,145 830,152 860,175 905,210 930,250 965,295 1000,320 1025,350 1050,395 1080,460 1100,530 1130,600 1160,640 1190,665 1210,680 1220,675 1235,630 1260,550 1290,480 1310,430 1330,375 1360,300 1375,240 1390,180 1410,120 1435,93 1455,80 1475,35 1490,0'],
    [3136, -90, '712,910 735,890 760,872 780,880 810,935 835,980 855,1015 875,1045 885,1090'],
    [0, 840, '4034,200 4055,265 4071,305 4091,350 4116,384 4149,378 4173,381 4210,360 4234,280 4255,190 4275,90 4292,0'],
    [3136, -90, '1180,820 1210,700 1240,600 1270,500 1300,420 1320,372 1345,350 1365,325 1385,318 1407,307']
];
const lowerBand = [
    [0, 0, '13,1115 23,1135 38,1146 52,1146 65,1130 80,1100 92,1065 100,1052 120,1056 130,1070 143,1083 153,1078 165,1045 180,1000 199,972 210,980 225,945 245,925 270,890 290,877 305,880 325,910 345,915 385,915 395,932 407,914 435,915 450,895 495,893 510,875 525,860 545,873 562,900 577,926 605,927 635,917 670,921 700,905 738,890 750,862 778,850 790,880 800,900 810,900 828,878 857,820 886,802 915,745 942,692 958,682 973,660 990,690 1010,720 1035,756 1052,755 1065,725 1085,670 1110,590 1130,535 1150,475 1170,410 1195,410 1217,417 1250,401 1265,405 1285,440 1305,458 1330,458 1355,453 1380,485 1415,513 1435,540 1450,550 1510,555 1550,536 1568,558'],
    [1568, 0, '13,570 23,625 40,670 60,730 85,770 100,810 120,860 140,882 155,881 170,850 190,825 210,790 260,790 275,805 300,802 320,797 335,778 375,768 390,774 410,752 425,752 455,724 475,735 490,715 510,670 535,615 560,590 580,577 595,565 615,564 640,575 670,580 690,590 715,616 740,601 750,660 760,740 775,820 795,855 845,857 865,846 900,852 942,855 955,795 970,750 985,725 995,722 1008,740 1020,800 1035,880 1050,960 1070,1045 1090,1110 1110,1155 1123,1165 1133,1188 1143,1184 1155,1150 1175,1125 1190,1085 1205,1080 1213,1062 1222,1065'],
    [2352, 840, '455,290 475,370 487,400 500,500 513,570 525,595 543,609 553,608 570,590 595,570 610,573 637,563 650,600 680,609 700,515 720,450 745,390 768,333 778,332 790,370 805,393 818,415 830,402 838,415 867,417 880,436 925,441 940,432 965,442 985,485 1005,520 1025,555 1040,620 1060,680 1085,750 1100,830 1115,900 1130,937 1145,939 1170,928 1185,925 1208,905 1220,925 1230,1020 1240,1095 1245,1130 1280,1130 1285,1095 1300,1020 1325,860 1340,815 1360,730 1380,670 1400,570 1413,510 1432,530 1452,530 1470,490 1485,465 1500,375 1515,335 1530,265 1545,233'],
    [0, 840, '3905,245 3920,285 3940,345 3961,385 3985,402 4010,397 4022,435 4032,440 4042,500 4051,600 4063,690 4079,755 4108,789 4140,794 4169,796 4190,803 4210,835 4228,850 4238,820 4251,730 4267,655 4283,555 4296,500 4308,420 4320,385 4335,345 4349,260 4361,160 4377,50 4387,0'],
    [3136, -90, '1265,860 1280,780 1300,680 1325,590 1345,560 1365,520 1390,500 1407,465']
];
const adxLine = [
    [0, 0, '13,213 33,250 60,253 72,268 85,273 95,279 115,275 140,245 155,237 175,213 187,208 203,222 220,216 238,253 265,259 280,245 297,215 325,258 345,257 367,243 390,200 410,160 434,124 455,162 467,188 475,197 500,249 530,233 543,242 555,233 565,234 583,260 602,261 630,291 655,303 672,282 690,257 705,267 720,268 738,285 750,285 768,260 780,257 795,232 807,208 830,240 850,266 865,270 885,265 900,240 915,237 940,277 960,280 977,292 992,280 1015,235 1042,186 1062,198 1080,240 1095,236 1132,237 1150,215 1160,233 1178,250 1205,259 1220,245 1248,233 1270,251 1298,250 1318,267 1340,264 1355,253 1375,275 1392,293 1420,297 1450,294 1480,309 1497,305 1517,312 1542,302 1552,307'],
    [1568, 0, '0,300 15,287 40,240 62,198 87,204 103,190 120,195 140,185 150,186 170,222 190,243 215,240 240,221 250,237 262,236 280,221 305,262 327,277 340,270 375,210 400,175 425,130 444,103 462,134 484,138 500,175 515,212 545,213 565,235 600,262 620,245 630,262 645,261 662,238 680,260 695,275 715,277 748,292 770,272 805,283 820,270 838,251 860,263 892,283 915,267 930,266 936,257 947,271 980,277 1000,260 1030,205 1062,160 1075,168 1105,160 1125,195 1150,234 1172,234 1200,202 1220,221 1248,229 1265,212 1287,176 1305,182 1335,232 1360,237 1378,245 1402,220 1425,248 1458,230 1482,263 1515,263 1530,257 1545,272 1558,272'],
    [3136, 0, '0,257 15,248 55,242 70,257 100,274 145,295 160,285 180,272 200,235 212,239 237,263 257,252 275,258 295,264 310,250 330,220 345,223 375,265 405,287 428,278 450,215 468,190 485,215 505,245 530,275 547,280 565,295 580,283 600,240 622,211 640,215 665,245 690,265 720,277 740,257 757,270 770,268 785,277 825,278 838,263 850,277 877,290 905,280 925,250 950,277 975,278 995,240 1013,213 1045,212 1070,175 1110,105 1140,55 1157,52 1168,44 1190,63 1210,110 1228,160 1248,173 1275,170 1305,200 1316,200 1335,239 1353,240 1368,256 1390,245 1407,253']
];
const rsiLine = [
    [0, 0, '13,545 23,588 33,560 45,540 55,545 63,535 72,555 85,545 95,520 115,508 125,490 140,458 150,515 160,510 170,495 180,508 190,555 199,560 209,630 229,550 258,555 268,520 288,488 298,510 307,590 317,612 327,590 337,555 346,555 356,565 376,510 390,485 395,468 405,485 425,480 434,490 444,535 454,555 464,595 474,565 484,547 493,543 503,575 513,637 523,610 533,602 542,610 552,640 562,580 572,585 582,558 591,523 601,555 611,528 621,580 631,560 640,576 650,575 670,524 680,527 689,518 699,560 709,543 719,545 729,566 739,540 750,520 758,500 768,510 780,510 787,470 797,448 807,515 817,535 836,527 855,532 866,540 876,592 886,545 895,540 905,562 915,540 925,495 970,494 983,433 993,450 1003,432 1022,427 1032,415 1042,432 1052,433 1062,508 1082,502 1091,562 1101,562 1111,552 1121,560 1130,562 1140,615 1150,545 1160,552 1170,518 1189,600 1199,550 1209,548 1219,508 1228,537 1248,533 1258,570 1267,585 1277,620 1287,622 1297,587 1307,578 1317,530 1356,531 1366,622 1375,628 1385,612 1395,610 1415,618 1424,650 1434,658 1444,635 1454,577 1464,576 1473,515 1483,560 1493,562 1503,520 1513,520 1522,502 1532,500 1542,492 1552,600 1561,635'],
    [1568, 0, '0,602 13,605 23,652 33,633 42,632 52,647 62,617 75,595 82,595 92,630 101,638 111,613 140,633 160,575 180,573 190,533 199,570 219,570 229,515 239,570 248,557 258,555 268,472 278,495 288,528 297,545 307,578 317,535 327,534 337,546 346,500 366,497 376,517 386,475 395,515 405,502 415,498 425,467 444,460 454,483 464,484 474,450 484,520 493,562 503,530 513,550 523,578 543,579 552,520 562,490 582,503 591,560 601,590 611,597 631,537 640,500 660,482 670,550 680,590 699,615 709,615 719,575 729,515 738,550 748,620 758,648 768,605 778,605 787,580 797,572 807,522 820,507 836,500 846,560 856,550 866,565 876,548 886,570 895,566 905,578 925,583 935,598 944,530 954,490 964,545 974,572 984,563 993,575 1003,607 1013,598 1022,643 1032,612 1042,622 1062,628 1072,578 1082,603 1092,608 1102,595 1111,560 1121,547 1130,595 1140,540 1150,538 1160,563 1170,565 1199,597 1209,570 1219,568 1228,627 1248,622 1258,635 1267,590 1277,640 1287,640 1297,592 1307,590 1317,562 1336,560 1346,527 1356,538 1366,538 1376,522 1385,480 1395,473 1405,510 1415,583 1434,487 1444,530 1452,513 1464,545 1483,546 1493,515 1503,535 1522,521 1532,525 1542,572 1552,568 1561,620'],
    [3136, 0, '0,632 13,590 23,575 33,592 43,568 52,582 62,555 72,542 82,560 92,582 101,560 111,521 121,568 140,580 150,578 160,612 170,583 180,590 190,612 200,618 210,590 220,592 230,606 240,600 248,643 258,610 277,630 287,614 297,640 308,650 318,668 338,668 347,590 356,515 376,555 386,543 405,537 415,540 425,510 435,460 445,430 455,428 465,445 474,470 484,552 494,540 503,518 513,567 533,558 543,567 553,540 562,535 572,505 591,461 601,498 611,478 621,473 630,540 640,505 660,542 685,542 699,506 709,555 719,575 729,618 739,595 748,560 768,595 778,580 800,594 836,594 846,597 856,545 866,522 876,530 885,635 895,635 905,652 914,675 924,615 934,600 944,608 954,570 964,551 974,550 985,510 995,487 1005,485 1015,510 1025,535 1035,530 1060,472 1070,470 1085,453 1100,453 1120,442 1130,425 1140,422 1150,430 1160,427 1172,426 1180,417 1190,457 1199,453 1209,500 1218,522 1229,483 1240,480 1250,462 1260,458 1268,447 1278,500 1288,500 1297,483 1307,508 1317,492 1326,565 1336,580 1346,515 1355,520 1365,558 1375,560 1385,577 1395,547 1407,555']
];

function add(parent, tag, className, attrs) {
    const el = document.createElementNS(SVG_NS, tag);
    el.setAttribute('class', className);
    for (const name in attrs) {
        el.setAttribute(name, attrs[name]);
    }
    parent.appendChild(el);
}

function drawLine(svg, stretches, className) {
    const points = [];
    stretches.forEach(([dx, dy, list]) => {
        list.split(' ').forEach(pair => {
            const [x, y] = pair.split(',').map(Number);
            points.push((x + dx) + ',' + (y + dy));
        });
    });
    add(svg, 'polyline', className, { points: points.join(' ') });
}

function drawBars(svg) {
    const names = { b: 'up', r: 'down', d: 'doji' };
    bars.trim().split(/\s+/).forEach((bar, i) => {
        const x = BAR_START + i * BAR_STEP;
        const [high, top, bottom, low] = bar.slice(1).split(',').map(Number);
        const name = names[bar[0]];
        add(svg, 'path', 'wick ' + name, { d: `M${x} ${high}V${low}` });
        if (name === 'doji') {
            add(svg, 'path', 'body doji', { d: `M${x - 4} ${top}h8` });
        } else {
            add(svg, 'rect', 'body ' + name, { x: x - 2.5, y: top, width: 5, height: bottom - top });
        }
    });
}

const priceChart = document.getElementById('priceChart');
zones.forEach(([x, y, width, height]) => add(priceChart, 'rect', 'zone', { x, y, width, height }));
drawBars(priceChart);
drawLine(priceChart, upperBand, 'band');
drawLine(priceChart, middleBand, 'band');
drawLine(priceChart, lowerBand, 'band');
drawLine(document.getElementById('adxChart'), adxLine, 'adx-line');
drawLine(document.getElementById('rsiChart'), rsiLine, 'rsi-line');
```
